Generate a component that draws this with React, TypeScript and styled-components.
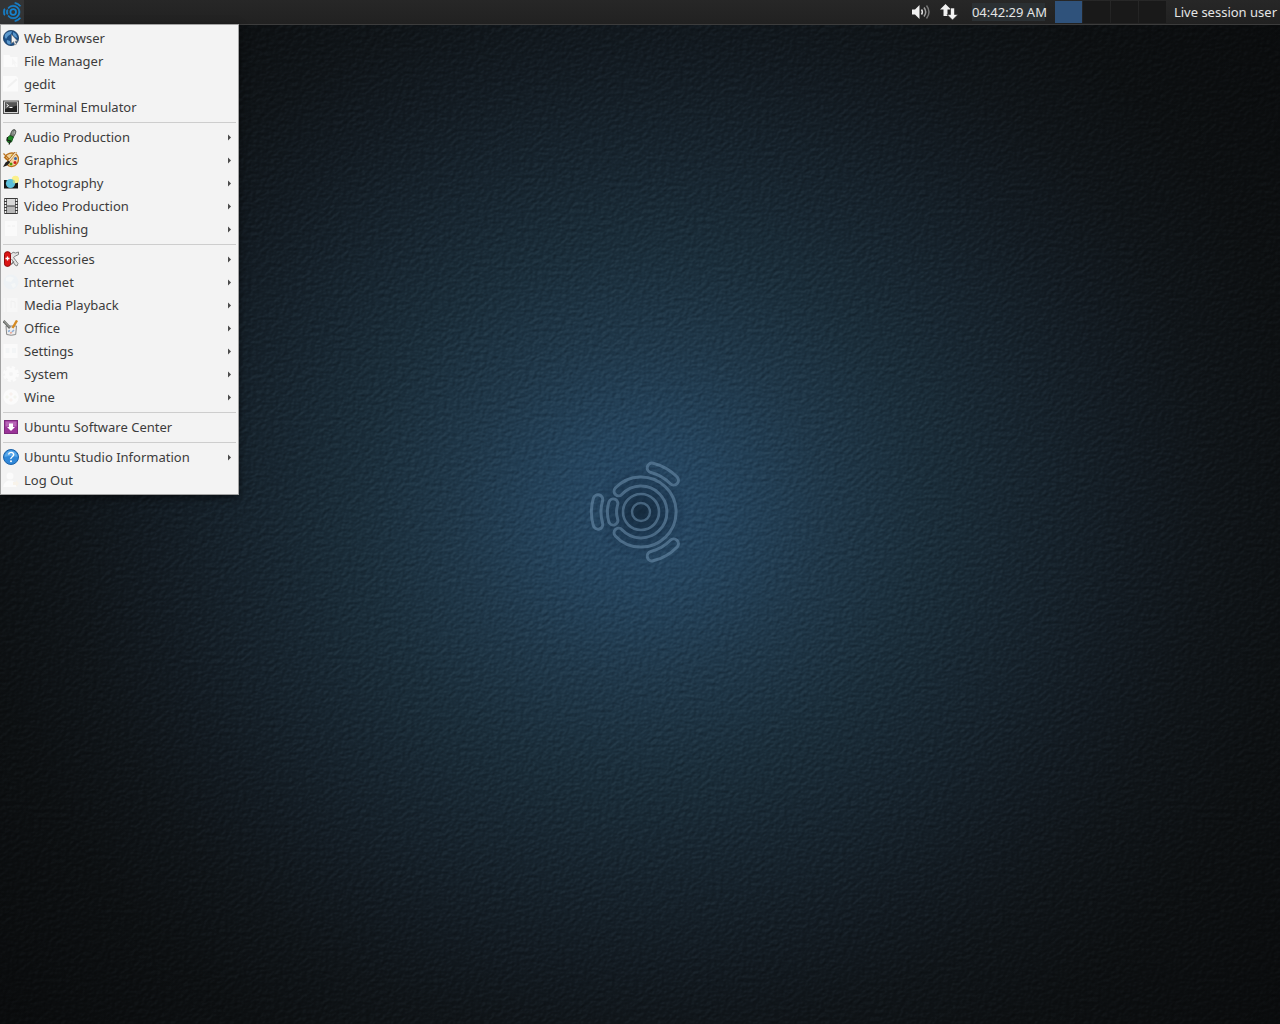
import React from "react";
import styled, { createGlobalStyle } from "styled-components";

const GlobalStyle = createGlobalStyle`
  * { box-sizing: border-box; }
  body {
    margin: 0;
    background: #0b0e11;
    font-family: "Noto Sans", "Open Sans", sans-serif;
    font-size: 13px;
    line-height: 23px;
  }
  button { font: inherit; border: 0; margin: 0; padding: 0; background: none; color: inherit; cursor: default; }
`;

const Desktop = styled.div`
  position: relative;
  min-height: 100vh;
  display: flex;
  flex-direction: column;
  overflow: hidden;
  isolation: isolate;
`;

const Wallpaper = styled.div`
  position: absolute;
  inset: 0;
  z-index: -1;
  display: grid;
  place-items: center;
  background: radial-gradient(
    ellipse 71% 82% at 50% 50%,
    #274866 0%,
    #25445d 9%,
    #20384a 20%,
    #1b2e3b 31%,
    #17242e 43%,
    #131b22 54%,
    #101519 63%,
    #0d1012 74%,
    #090a0b 100%
  );
`;

const Leather = styled.svg`
  position: absolute;
  inset: 0;
  width: 100%;
  height: 100%;
  mix-blend-mode: soft-light;
  opacity: 0.7;
`;

const Emblem = styled.svg`
  position: relative;
  width: 120px;
  height: 120px;
`;

const Panel = styled.header`
  display: flex;
  align-items: center;
  height: 25px;
  border-bottom: 1px solid #3c3c3c;
  background: linear-gradient(#272727, #212121);
  color: #e4e4e4;
`;

const MenuButton = styled.button`
  display: grid;
  place-items: center;
  width: 24px;
  height: 24px;
  background: #333435;
`;

const Tray = styled.div`
  display: flex;
  align-items: center;
  gap: 8px;
  margin-left: auto;
`;

const TrayButton = styled.button`
  display: grid;
  place-items: center;
  width: 20px;
  height: 24px;
`;

const Clock = styled.time`
  margin-left: 13px;
  line-height: 18px;
  width: 73px;
  white-space: nowrap;
  background: #2b3033;
`;

const Pager = styled.div`
  display: flex;
  gap: 1px;
  margin-left: 10px;
`;

const Workspace = styled.button<{ $active?: boolean }>`
  width: 27px;
  height: 22px;
  background: ${(p) => (p.$active ? "#2f527b" : "#191919")};
`;

const UserButton = styled.button`
  margin: 0 3px 0 8px;
  white-space: nowrap;
`;

const Menu = styled.nav`
  align-self: flex-start;
  width: 239px;
  margin-top: -1px;
  padding: 2px 0;
  border: 1px solid #a3a3a3;
  background: #f3f3f3;
  color: #3c3c3c;
  box-shadow: 0 3px 8px rgba(0, 0, 0, 0.5);
`;

const MenuItem = styled.button`
  display: flex;
  align-items: center;
  gap: 5px;
  width: 100%;
  height: 23px;
  padding: 0 6px 0 2px;
  text-align: left;
`;

const Label = styled.span`
  flex: 1;
`;

const Separator = styled.hr`
  height: 1px;
  margin: 3px 2px;
  border: 0;
  background: #cdcdcd;
`;

const Icon = styled.svg`
  flex: none;
  width: 16px;
  height: 16px;
  margin-bottom: 1px;
`;

const Arrow = styled.svg`
  width: 4px;
  height: 7px;
`;

/* Outline of a round-ended band that follows a circle round the origin. */
function band(radius: number, half: number, from: number, to: number) {
  const point = (r: number, deg: number) => {
    const a = (deg * Math.PI) / 180;
    return `${(r * Math.cos(a)).toFixed(2)} ${(r * Math.sin(a)).toFixed(2)}`;
  };
  const large = to - from > 180 ? 1 : 0;
  const outer = radius + half;
  const inner = radius - half;
  return (
    `M${point(outer, from)} A${outer} ${outer} 0 ${large} 1 ${point(outer, to)} ` +
    `A${half} ${half} 0 0 1 ${point(inner, to)} ` +
    `A${inner} ${inner} 0 ${large} 0 ${point(inner, from)} ` +
    `A${half} ${half} 0 0 1 ${point(outer, from)}Z`
  );
}

const emblemBands = [
  band(30.5, 4.6, -137, 137),
  band(29, 4.6, 163, 197),
  band(44.8, 4.8, 164, 196),
  band(45.5, 4.8, -76, -44),
  band(45.5, 4.8, 44, 76),
];

function WallpaperArt() {
  return (
    <Wallpaper aria-hidden="true">
      <Leather>
        <filter id="leather" x="0" y="0" width="100%" height="100%" colorInterpolationFilters="sRGB">
          <feTurbulence type="fractalNoise" baseFrequency="0.22 0.26" numOctaves="2" seed="7" result="grain" />
          <feDiffuseLighting in="grain" surfaceScale="0.8" diffuseConstant="0.7" lightingColor="#fff">
            <feDistantLight azimuth="235" elevation="45" />
          </feDiffuseLighting>
        </filter>
        <rect width="100%" height="100%" filter="url(#leather)" />
      </Leather>
      <Emblem viewBox="-61 -60 120 120">
        <defs>
          <radialGradient id="dark">
            <stop offset="0" stopColor="#0c1c2a" stopOpacity="0.7" />
            <stop offset="0.5" stopColor="#10253a" stopOpacity="0.4" />
            <stop offset="1" stopColor="#10253a" stopOpacity="0" />
          </radialGradient>
        </defs>
        <circle r="48" fill="url(#dark)" />
        <g fill="none" stroke="#6f91ae" strokeOpacity="0.55" strokeWidth="3">
          <circle r="9" strokeWidth="2.4" />
          <circle r="18" strokeWidth="2.6" />
          {emblemBands.map((d) => (
            <path key={d} d={d} />
          ))}
        </g>
      </Emblem>
    </Wallpaper>
  );
}

const icons: Record<string, React.ReactNode> = {
  web: (
    <>
      <circle cx="8" cy="8" r="7.6" fill="#1d4f86" stroke="#173a60" strokeWidth=".8" />
      <path d="M2 4.5Q5 1 9 1.2L8 4 5 6 3 9Q1 7 2 4.5ZM10 2l3 2 1.5 4-2.5-1-2-2zM4 10l3 1 1 3-2 .5Q3 13 4 10Z" fill="#5b98cc" />
      <path d="M8.5 4.5v9l2-1.8 1.4 3.2 1.6-.7-1.4-3h2.6z" fill="#f2f2f2" stroke="#777" strokeWidth=".6" />
    </>
  ),
  files: (
    <>
      <path d="M.5 2h6l1 2h7v10h-14z" fill="#fbfbfb" />
      <path d="M9 5v7l2-1 1 3 1-.5-1-3h2z" fill="#f5f5f5" />
    </>
  ),
  gedit: (
    <>
      <path d="M0 0h13l2 2V15.5H0z" fill="#fbfbfb" />
      <path d="M4 12l1-2.5 8-7 1.5 1.5-8 7z" fill="#f1f1f1" />
    </>
  ),
  terminal: (
    <>
      <rect x=".5" y="2" width="15" height="12.5" fill="#d4d4d4" stroke="#555" />
      <rect x="2" y="3.5" width="12" height="9.5" fill="#222" />
      <path d="M2 3.5h12v3L2 10z" fill="#555" />
      <path d="M3.5 5l2 1.5-2 1.5M6.5 8.5h3" fill="none" stroke="#fff" />
    </>
  ),
  audio: (
    <>
      <path d="M8.5 2.5Q9.5 0 12 .7 13.5 2 12.5 4.5L10.5 8 7 6.5z" fill="#747a74" stroke="#3d423d" strokeWidth=".7" />
      <path d="M7 6.5l3.5 1.5L8.5 13 5 13.500 4 12 4.500 8.500z" fill="#1d8a26" stroke="#114415" strokeWidth=".8" />
      <path d="M4.500 8L4 11l3.500 1-1.500 3.500" fill="none" stroke="#172417" strokeWidth="1.200" />
      <path d="M10 2.500v3M11.500 2v3" stroke="#b8bdb8" strokeWidth=".7" />
    </>
  ),
  graphics: (
    <>
      <path d="M4 2.500Q9-.5 13.500 2.500 17 6 14.500 11 11 16 6 14 3 12 4.500 10 6 8 3 7 1 5 4 2.500Z" fill="#f3d3a0" stroke="#b8701c" strokeWidth="1.300" />
      <circle cx="12.500" cy="6.500" r="1.500" fill="#3566a8" />
      <circle cx="12" cy="10.500" r="1.500" fill="#cf2020" />
      <circle cx="8" cy="12" r="1.500" fill="#4e9a06" />
      <circle cx="9" cy="3.500" r="1" fill="#e9d524" />
      <path d="M.5 1.500l7 7M1 5l5 4" stroke="#b8701c" strokeWidth="1.200" />
      <path d="M13 0L5 10" stroke="#a8641a" strokeWidth="2.400" />
      <path d="M13 .5L5 10" stroke="#f5e4c4" strokeWidth="1.200" />
      <path d="M6 8.500l-3.500 2L0 15l4-1.500 3-3z" fill="#222" />
    </>
  ),
  photo: (
    <>
      <path d="M1 5h14v8.500H1z" fill="#151515" />
      <circle cx="12.500" cy="4.500" r="3.700" fill="#fbf08a" />
      <circle cx="7.500" cy="8.500" r="4.600" fill="#5cc0dc" />
      <path d="M10 4.600a4.600 4.600 0 0 1 2 4Q8.800 8.500 10 4.600Z" fill="#a8d89c" />
    </>
  ),
  video: (
    <>
      <rect x="1" y="0" width="14" height="16" rx="1" fill="#3a3a3a" />
      <rect x="4" y="1" width="8" height="6.500" fill="#d9d9d9" />
      <rect x="4" y="8.500" width="8" height="6.500" fill="#b8b8b8" />
      <path d="M2.500 1v14M13.500 1v14" stroke="#eee" strokeWidth="1.600" strokeDasharray="2 1" />
    </>
  ),
  publishing: (
    <>
      <path d="M2 0h12v15H2z" fill="#fafafa" />
      <path d="M4.500 5h3M9 5h3" stroke="#f0f0f0" />
    </>
  ),
  accessories: (
    <>
      <path d="M8 3Q10 0 12.500 2L15.500 1v2.500l-3 1.500-2 1.500 4.500 6-1 2.500-2-1L8.500 8" fill="#e4e4e4" stroke="#777" strokeWidth=".9" />
      <path d="M8 13.500l3-3" stroke="#777" strokeWidth="1.300" />
      <rect x="1.500" y=".8" width="6" height="14.500" rx="2.500" fill="#db1414" stroke="#8e0b0b" strokeWidth="1" />
      <path d="M4.500 5.500v4M2.500 7.500h4" stroke="#fff" strokeWidth="1.300" />
    </>
  ),
  internet: (
    <>
      <circle cx="8" cy="8" r="7.500" fill="#eef2f5" />
      <path d="M3 4q4-3 8 0l-3 4-5-1zM8 10l4-1 1 3-3 2z" fill="#f5f7f7" />
    </>
  ),
  media: (
    <>
      <path d="M.5 1h14v14H.5z" fill="#f7f7f7" />
      <path d="M3 1v14M8 11V4l4 1v6" fill="none" stroke="#f0f0f0" />
    </>
  ),
  office: (
    <>
      <path d="M3 6h10.500l-.8 8.500q-4.500 1.500-9 0z" fill="#eee" stroke="#8a8a8a" />
      <path d="M.5 1l6.500 7" stroke="#686b68" strokeWidth="2.600" />
      <path d="M1 1.200L7 7.500" stroke="#babdb6" strokeWidth=".8" />
      <path d="M14 .5l-4.500 7.500" stroke="#d58a21" strokeWidth="2.400" />
      <path d="M5 11.500l2-1M9 12l2-2" stroke="#8fb0d6" strokeWidth="1.600" />
      <path d="M7 13l2-.5" stroke="#e8a798" strokeWidth="1.400" />
    </>
  ),
  settings: (
    <>
      <path d="M.5 1h14v14H.5z" fill="#fafafa" />
      <path d="M2.500 5h4v5h-4zM9 5h4v5H9z" fill="#f3f5f6" />
    </>
  ),
  system: (
    <>
      <circle cx="8" cy="8" r="6.500" fill="none" stroke="#fbfbfb" strokeWidth="3" strokeDasharray="3 2.100" />
      <circle cx="8" cy="8" r="4" fill="none" stroke="#fbfbfb" strokeWidth="4" />
    </>
  ),
  wine: (
    <>
      <circle cx="8" cy="8" r="7.700" fill="#fbfbfb" />
      <path d="M8 3l2 2-2 2-2-2zM8 9l2 2-2 2-2-2z" fill="#f8f1ee" />
      <path d="M4 6l2 2-2 2-2-2zM12 6l2 2-2 2-2-2z" fill="#f4f5ef" />
    </>
  ),
  software: (
    <>
      <rect x="1.500" y="1.500" width="13" height="13" fill="#9a3398" stroke="#7c2a7c" />
      <rect x="2.500" y="2.500" width="11" height="5" fill="#b766b6" />
      <path d="M6 4.500h4V8h2L8 12 4 8h2z" fill="#fff" />
    </>
  ),
  info: (
    <>
      <circle cx="8" cy="8" r="7.500" fill="#2f87d8" stroke="#1c62a8" />
      <path d="M1.500 8a6.500 6.500 0 0 1 13 0Q8 6 1.500 8Z" fill="#58a8ea" />
      <path d="M5.500 5.500Q6 3.300 8.200 3.400T10.700 5.700Q10.500 7 9 8T8 10" fill="none" stroke="#fff" strokeWidth="1.400" />
      <circle cx="8" cy="12.300" r="1" fill="#fff" />
    </>
  ),
  logout: (
    <>
      <circle cx="7" cy="4" r="3.500" fill="#fbfbfb" />
      <path d="M0 15q1-5 5-6.500h4q4 1.500 5 6.500z" fill="#fbfbfb" />
      <path d="M10 10h3V8l3 3.500-3 3.500v-2h-3z" fill="#f8f3ea" />
    </>
  ),
};

type Entry = { icon: string; label: string; sub?: boolean };

const groups: Entry[][] = [
  [
    { icon: "web", label: "Web Browser" },
    { icon: "files", label: "File Manager" },
    { icon: "gedit", label: "gedit" },
    { icon: "terminal", label: "Terminal Emulator" },
  ],
  [
    { icon: "audio", label: "Audio Production", sub: true },
    { icon: "graphics", label: "Graphics", sub: true },
    { icon: "photo", label: "Photography", sub: true },
    { icon: "video", label: "Video Production", sub: true },
    { icon: "publishing", label: "Publishing", sub: true },
  ],
  [
    { icon: "accessories", label: "Accessories", sub: true },
    { icon: "internet", label: "Internet", sub: true },
    { icon: "media", label: "Media Playback", sub: true },
    { icon: "office", label: "Office", sub: true },
    { icon: "settings", label: "Settings", sub: true },
    { icon: "system", label: "System", sub: true },
    { icon: "wine", label: "Wine", sub: true },
  ],
  [{ icon: "software", label: "Ubuntu Software Center" }],
  [
    { icon: "info", label: "Ubuntu Studio Information", sub: true },
    { icon: "logout", label: "Log Out" },
  ],
];

const studioBands = [
  band(31, 3, -139, 139),
  band(31, 3, 163, 197),
  band(46, 3, 163, 197),
  band(46, 3, -77, -43),
  band(46, 3, 43, 77),
];

export default function App() {
  return (
    <>
      <GlobalStyle />
      <Desktop>
        <WallpaperArt />
        <Panel>
          <MenuButton aria-label="Applications menu" aria-expanded="true">
            <svg width="20" height="22" viewBox="-56 -55 100 110" aria-hidden="true">
              <g fill="#1583d0" stroke="#1583d0" strokeWidth="3">
                {studioBands.map((d) => (
                  <path key={d} d={d} />
                ))}
                <circle r="14" fill="none" strokeWidth="9" />
              </g>
            </svg>
          </MenuButton>
          <Tray>
            <TrayButton aria-label="Volume">
              <svg width="20" height="16" viewBox="0 0 20 16" fill="none" aria-hidden="true">
                <path d="M1 5.500h3L8.500 1v14L4 10.500H1z" fill="#f0f0f0" />
                <path d="M10.500 5.500q1.800 2.500 0 5" stroke="#e0e0e0" strokeWidth="1.500" />
                <path d="M13 3.500q3.400 4.500 0 9" stroke="#a0a0a0" strokeWidth="1.500" />
                <path d="M15.500 1.500q5 6.500 0 13" stroke="#777" strokeWidth="1.500" />
              </svg>
            </TrayButton>
            <TrayButton aria-label="Network">
              <svg width="18" height="16" viewBox="0 0 18 16" fill="#f2f2f2" aria-hidden="true">
                <path d="M5.500 0L11 5.500H7.500V12h-4V5.500H0z" />
                <path d="M12.500 16L18 10.500h-3.500V4h-4v6.500H7z" stroke="#242424" strokeWidth=".6" />
              </svg>
            </TrayButton>
          </Tray>
          <Clock>04:42:29 AM</Clock>
          <Pager>
            <Workspace $active aria-label="Workspace 1" />
            <Workspace aria-label="Workspace 2" />
            <Workspace aria-label="Workspace 3" />
            <Workspace aria-label="Workspace 4" />
          </Pager>
          <UserButton>Live session user</UserButton>
        </Panel>
        <Menu aria-label="Applications">
          {groups.map((group, index) => (
            <React.Fragment key={group[0].label}>
              {index > 0 && <Separator />}
              {group.map((entry) => (
                <MenuItem key={entry.label}>
                  <Icon viewBox="0 0 16 16" aria-hidden="true">
                    {icons[entry.icon]}
                  </Icon>
                  <Label>{entry.label}</Label>
                  {entry.sub && (
                    <Arrow viewBox="0 0 4 7" aria-hidden="true">
                      <path d="M0 .5l3 3-3 3z" fill="#4a4a4a" />
                    </Arrow>
                  )}
                </MenuItem>
              ))}
            </React.Fragment>
          ))}
        </Menu>
      </Desktop>
    </>
  );
}
